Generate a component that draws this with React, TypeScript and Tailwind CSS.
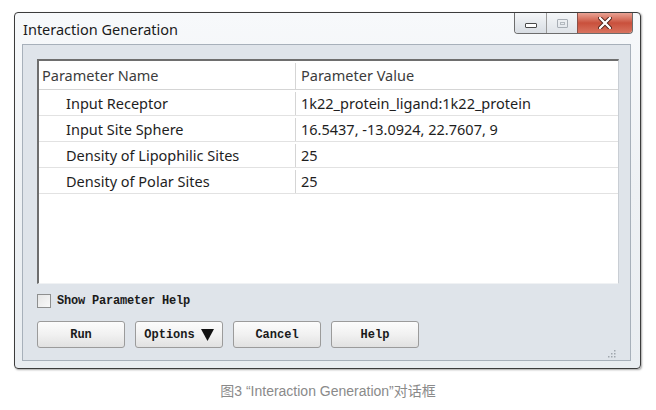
const rows = [
  { name: 'Input Receptor', value: '1k22_protein_ligand:1k22_protein' },
  { name: 'Input Site Sphere', value: '16.5437, -13.0924, 22.7607, 9' },
  { name: 'Density of Lipophilic Sites', value: '25' },
  { name: 'Density of Polar Sites', value: '25' },
]

const buttons = ['Run', 'Options', 'Cancel', 'Help']

export default function App() {
  return (
    <div className="h-[410px] w-[656px] bg-white font-['Noto_Sans',sans-serif]">
      <div className="pl-[14px] pt-[12px]">
        {/* Window */}
        <div className="flex h-[357px] w-[627px] flex-col rounded-[4px] border border-[#3c3c3c] bg-gradient-to-b from-[#f7f9fb] via-[#eef1f4] to-[#e9edf1] shadow-[1px_1px_2px_rgba(0,0,0,0.35)]">
          {/* Title bar */}
          <div className="flex h-[34px] items-start justify-between">
            <div className="pl-[8px] pt-[6px] text-[14.5px] leading-[20px] text-[#1b1b1b]">
              Interaction Generation
            </div>
            <div className="mr-[7px] flex h-[21px] overflow-hidden rounded-b-[4px] border border-t-0 border-[#6d6d6d]">
              <div className="flex w-[32px] items-center justify-center border-r border-[#9a9a9a] bg-gradient-to-b from-[#f4f6f8] to-[#d8dde3]">
                <div className="mt-[5px] h-[5px] w-[12px] rounded-[1px] border border-[#4a4a4a] bg-white" />
              </div>
              <div className="flex w-[31px] items-center justify-center border-r border-[#8a5048] bg-gradient-to-b from-[#f4f6f8] to-[#dfe3e8]">
                <div className="flex h-[9px] w-[11px] items-center justify-center rounded-[1px] border border-[#a8aeb5]">
                  <div className="h-[3px] w-[5px] border border-[#b4bac0]" />
                </div>
              </div>
              <div className="flex w-[54px] items-center justify-center bg-gradient-to-b from-[#e8a294] via-[#c9503c] to-[#d8735f]">
                <svg width="14" height="12" viewBox="0 0 14 12">
                  <path d="M2 1 L12 11 M12 1 L2 11" stroke="#4a1c14" strokeWidth="4" strokeLinecap="round" />
                  <path d="M2 1 L12 11 M12 1 L2 11" stroke="#ffffff" strokeWidth="2.4" strokeLinecap="round" />
                </svg>
              </div>
            </div>
          </div>

          {/* Client area */}
          <div className="mb-[7px] ml-[7px] mr-[9px] flex flex-1 flex-col border border-[#a7b0ba] bg-[#dfe4ea] px-[14px] pt-[14px]">
            {/* Table */}
            <div className="h-[225px] w-[582px] border-b border-l-2 border-r border-t-2 border-b-[#f0f2f4] border-l-[#6e6e6e] border-r-[#c9ced4] border-t-[#6e6e6e] bg-white text-[14.5px] text-[#1e1e1e]">
              <div className="flex h-[29px] items-center border-b border-[#d5d5d5] pt-[2px] text-[#3c3c3c]">
                <div className="flex h-full w-[257px] items-center border-r border-[#d5d5d5] pl-[3px]">Parameter Name</div>
                <div className="pl-[5px]">Parameter Value</div>
              </div>
              {rows.map((r) => (
                <div key={r.name} className="flex h-[26px] items-center border-b border-[#e2e2e2] pt-[2px]">
                  <div className="flex h-full w-[257px] items-center border-r border-[#d5d5d5] pl-[27px]">{r.name}</div>
                  <div className="pl-[5px]">{r.value}</div>
                </div>
              ))}
            </div>

            {/* Checkbox */}
            <div className="mt-[8px] flex items-center gap-[6px] font-['Liberation_Mono',monospace] text-[12px] font-bold text-[#1a1a1a]">
              <div className="h-[14px] w-[14px] border border-[#8e8f8f] bg-gradient-to-br from-[#e6e6e6] to-[#f8f8f8]" />
              <span className="tracking-[-0.2px]">Show Parameter Help</span>
            </div>

            {/* Buttons */}
            <div className="mt-[11px] flex gap-[10px]">
              {buttons.map((b) => (
                <div
                  key={b}
                  className="flex h-[27px] w-[88px] items-center justify-center gap-[6px] rounded-[3px] border border-[#9b9b9b] bg-gradient-to-b from-[#fcfcfc] via-[#f1f1f1] to-[#e1e1e1] font-['Liberation_Mono',monospace] text-[12px] font-bold text-[#1a1a1a]"
                >
                  <span>{b}</span>
                  {b === 'Options' && (
                    <svg width="13" height="12" viewBox="0 0 13 12">
                      <path d="M0 0 H13 L6.5 12 Z" fill="#111111" />
                    </svg>
                  )}
                </div>
              ))}
            </div>

            {/* Resize grip */}
            <div className="mt-auto flex justify-end pb-[2px]">
              <svg width="10" height="10" viewBox="0 0 10 10">
                {[
                  [8, 2], [8, 5], [5, 5], [8, 8], [5, 8], [2, 8],
                ].map(([x, y]) => (
                  <rect key={`${x}-${y}`} x={x} y={y} width="1.5" height="1.5" fill="#a0a6ad" />
                ))}
              </svg>
            </div>
          </div>
        </div>
      </div>

      {/* Caption */}
      <div className="mt-[12px] text-center font-['Liberation_Sans','Noto_Sans_CJK_SC',sans-serif] text-[14px] text-[#8a8a8a]">
        图3 “Interaction Generation”对话框
      </div>
    </div>
  )
}
